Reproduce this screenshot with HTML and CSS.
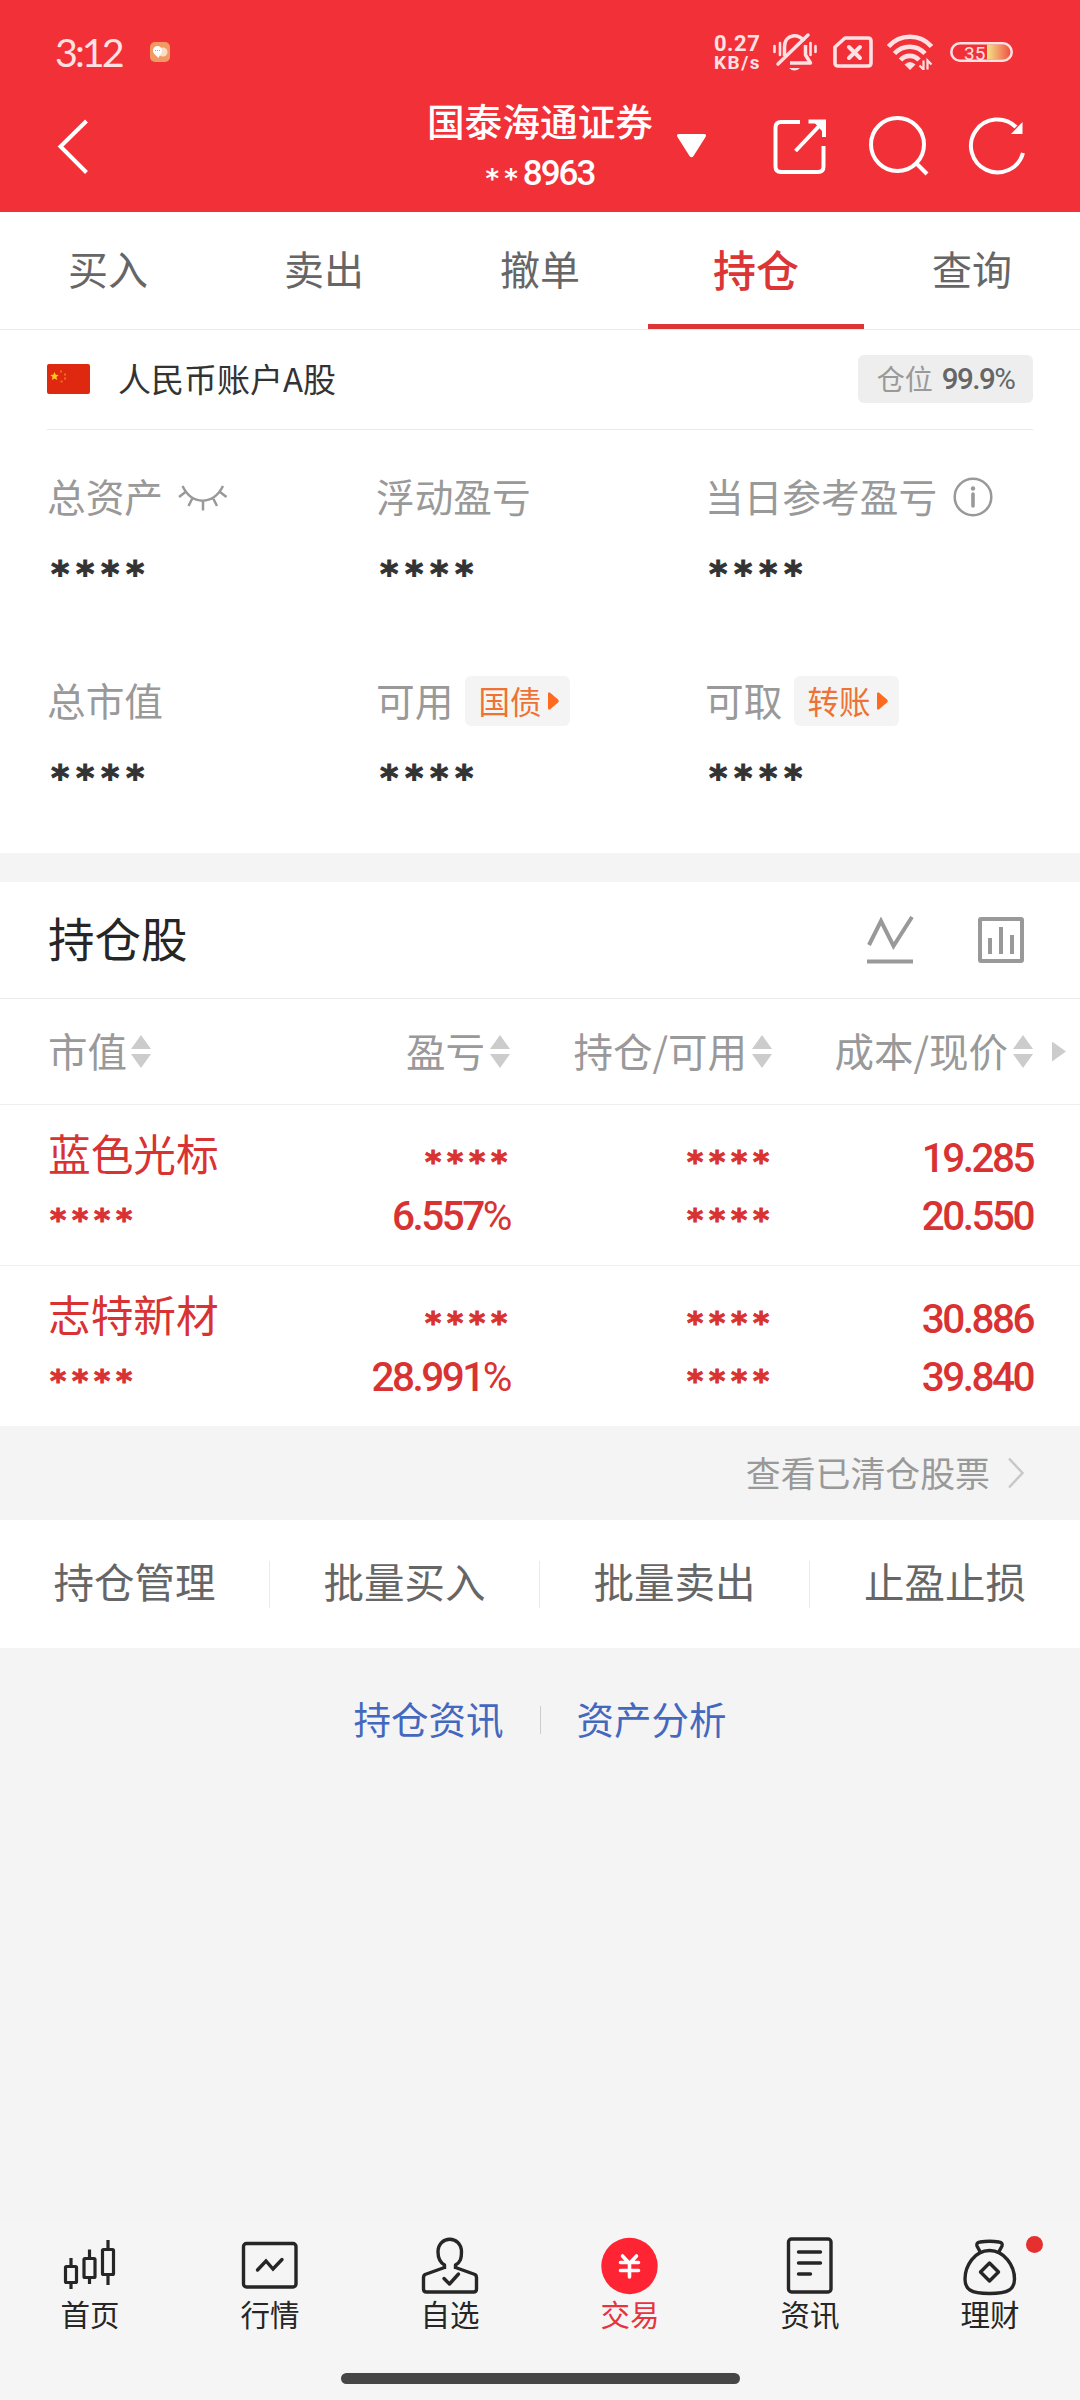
FILE: index.html
```html
<!DOCTYPE html>
<html lang="zh-CN">

<head>
    <meta charset="utf-8">
    <meta name="viewport" content="width=device-width, initial-scale=1.0">
    <title>持仓</title>
    <link rel="stylesheet" href="styles.css">
</head>

<body>
    <header>
        <div class="status">
            <span class="clock">3:12</span>
            <svg class="app" width="20" height="20" viewBox="0 0 20 20">
                <rect width="20" height="20" rx="5" fill="#f19a64" />
                <circle cx="13" cy="10" r="4.5" fill="#fbdcc6" />
                <path d="M3 8.5a4.5 4.5 0 0 1 9 0c0 3-2 4-3.500 7.500C6 13 3 12 3 8.500z" fill="#fff" />
                <path d="M5 8.500h5" stroke="#f19a64" stroke-dasharray="1 1" />
            </svg>
            <div class="speed"><b>0.27</b><b class="unit">KB/s</b></div>
            <svg class="bell" width="46" height="40" viewBox="0 0 46 40" fill="none" stroke="#ffe1e3" stroke-width="3.500">
                <path d="M2.500 14v6M8 11v12M38.500 11v12M43.500 14v6" stroke-width="2.600" stroke-linecap="round" />
                <path d="M12.500 24v-9c0-14 15.500-13.500 19.500-6M33.500 13v10l5 8H18" stroke-linejoin="round" />
                <path d="M6 32L36 3" stroke-linecap="round" />
                <path d="M17 36h11q-5.500 5-11 0z" fill="#ffe1e3" stroke="none" />
            </svg>
            <svg class="sim" width="40" height="32" viewBox="0 0 40 32" fill="none" stroke="#ffe1e3" stroke-width="3.600">
                <path d="M12 2h23q3 0 3 3v22q0 3-3 3H5q-3 0-3-3V11z" stroke-linejoin="round" />
                <path d="M16 11l11 11M27 11L16 22" stroke-width="4" stroke-linecap="round" />
            </svg>
            <svg class="wifi" width="46" height="36" viewBox="0 0 46 36" fill="none" stroke="#ffe1e3" stroke-width="4.600">
                <path d="M1.500 12.500C13-.5 33-.5 44.500 12.500M7.500 19.500c8.500-9 22-9 30.500 0M13.500 26c5-5.500 13.500-5.500 18.500 0" />
                <path d="M17.500 30.500q5.500-5 11 0L23 36z" fill="#ffe1e3" stroke="none" />
                <path d="M36.500 26.500v9l-4-4M40.500 35.500v-9l4 4" stroke-width="2.200" />
            </svg>
            <svg class="battery" width="63" height="20" viewBox="0 0 63 20">
                <defs>
                    <linearGradient id="charge">
                        <stop offset="0" stop-color="#f2e488" />
                        <stop offset="1" stop-color="#f05545" />
                    </linearGradient>
                </defs>
                <path d="M37 2.500h16q7 0 7 7.500t-7 7.500H37z" fill="url(#charge)" />
                <rect x="1.300" y="1.300" width="60.400" height="17.400" rx="8.700" fill="none" stroke="#ffe1e3" stroke-width="2.600" />
                <text x="14" y="17.500" class="percent">35</text>
            </svg>
        </div>
        <div class="titlebar">
            <svg class="back" width="45" height="60" viewBox="0 0 45 60" fill="none" stroke="#fff" stroke-width="4">
                <path d="M36.500 5L10.500 30.500l26 26" />
            </svg>
            <div class="broker">
                <h1>国泰海通证券</h1>
                <div class="number"><span class="hide">**</span>8963</div>
            </div>
            <svg class="caret" width="31" height="24" viewBox="0 0 31 24">
                <path d="M3 0h25q3 0 1.500 3L17.500 22q-2 2.500-4 0L1.500 3Q0 0 3 0z" fill="#fff" />
            </svg>
            <svg class="share" width="60" height="60" viewBox="0 0 60 60" fill="none" stroke="#fff" stroke-width="4">
                <path d="M30 6H11q-5.500 0-5.500 5.500v39q0 5.500 5.500 5.500h37q5.500 0 5.500-5.500V30" />
                <path d="M38.500 5.500H54V21M52 7L25.500 35" />
                <path d="M42 4h13.500v15z" fill="#fff" stroke="none" />
            </svg>
            <svg class="search" width="64" height="64" viewBox="0 0 64 64" fill="none" stroke="#fff" stroke-width="4">
                <circle cx="30.500" cy="30.500" r="26.500" />
                <path d="M49 49l11 11" />
            </svg>
            <svg class="refresh" width="60" height="62" viewBox="0 0 60 62" fill="none" stroke="#fff" stroke-width="4">
                <path d="M55 38A26.500 26.500 0 1 1 48 12" />
                <path d="M54.500 7v12H43z" fill="#fff" stroke="none" />
            </svg>
        </div>
    </header>

    <nav class="tabs">
        <a>买入</a>
        <a>卖出</a>
        <a>撤单</a>
        <a class="valgt">持仓</a>
        <a>查询</a>
    </nav>

    <section class="account">
        <div class="account-head">
            <svg width="43" height="30" viewBox="0 0 43 30">
                <rect width="43" height="30" rx="2" fill="#de2910" />
                <path d="M7.500 8l1.200 2.800 3 .2-2.300 2 .8 3-2.700-1.600L4.800 16l.8-3-2.300-2 3-.2z" fill="#ffc71e" />
                <path d="M13 7.500h2M17 10.500h2M17 14.500h2M13.500 17.500h2" stroke="#f0701c" stroke-width="2" />
            </svg>
            <h2>人民币账户A股</h2>
            <div class="position"><span>仓位</span><span class="num">99.9<i>%</i></span></div>
        </div>
        <div class="metrics">
            <div class="metric">
                <div class="label"><span>总资产</span>
                    <svg class="eye" width="50" height="26" viewBox="0 0 50 26" fill="none" stroke="#999" stroke-width="2.500">
                        <path d="M4.500 1C14 20.500 35 20.500 45 1M7.500 7L1 12M42 7l6.500 5M14 14l-3.500 7M25 16v9.500M35.500 14l3.500 7" />
                    </svg>
                </div>
                <div class="stars">****</div>
            </div>
            <div class="metric">
                <div class="label"><span>浮动盈亏</span></div>
                <div class="stars">****</div>
            </div>
            <div class="metric">
                <div class="label"><span>当日参考盈亏</span>
                    <svg class="info" width="40" height="40" viewBox="0 0 40 40" fill="none" stroke="#999" stroke-width="2.500">
                        <circle cx="20" cy="20" r="18.300" />
                        <path d="M20 17v12" stroke-width="3.600" stroke-linecap="round" />
                        <circle cx="20" cy="11.500" r="2.200" fill="#999" stroke="none" />
                    </svg>
                </div>
                <div class="stars">****</div>
            </div>
            <div class="metric">
                <div class="label"><span>总市值</span></div>
                <div class="stars">****</div>
            </div>
            <div class="metric">
                <div class="label"><span>可用</span>
                    <div class="chip"><span>国债</span>
                        <svg width="11" height="18" viewBox="0 0 11 18">
                            <path d="M0 2q0-3 2.500-1L10 7.500q1.500 1.500 0 3L2.500 17Q0 19 0 16z" fill="#ff6a1f" />
                        </svg>
                    </div>
                </div>
                <div class="stars">****</div>
            </div>
            <div class="metric">
                <div class="label"><span>可取</span>
                    <div class="chip"><span>转账</span>
                        <svg width="11" height="18" viewBox="0 0 11 18">
                            <path d="M0 2q0-3 2.500-1L10 7.500q1.500 1.500 0 3L2.500 17Q0 19 0 16z" fill="#ff6a1f" />
                        </svg>
                    </div>
                </div>
                <div class="stars">****</div>
            </div>
        </div>
    </section>

    <section class="holdings">
        <div class="holdings-head">
            <h2>持仓股</h2>
            <svg class="line" width="48" height="48" viewBox="0 0 48 48" fill="none" stroke="#999" stroke-width="4">
                <path d="M3 29L15 5l12.500 25L46 1M1 45.500h46" />
            </svg>
            <svg class="bars" width="48" height="48" viewBox="0 0 48 48" fill="none" stroke="#999" stroke-width="4">
                <rect x="3" y="3" width="42" height="42" rx="1" />
                <path d="M13 22v16M24 11v27M35 19v19" />
            </svg>
        </div>
        <div class="row columns">
            <div><span>市值</span><i class="sort"></i></div>
            <div><span>盈亏</span><i class="sort"></i></div>
            <div><span>持仓/可用</span><i class="sort"></i></div>
            <div><span>成本/现价</span><i class="sort"></i></div>
            <i class="more"></i>
        </div>
        <div class="row stock">
            <div><span class="name">蓝色光标</span><span class="stars">****</span></div>
            <div><span class="stars">****</span><span class="num">6.557<i>%</i></span></div>
            <div><span class="stars">****</span><span class="stars">****</span></div>
            <div><span class="num">19.285</span><span class="num">20.550</span></div>
        </div>
        <div class="row stock">
            <div><span class="name">志特新材</span><span class="stars">****</span></div>
            <div><span class="stars">****</span><span class="num">28.991<i>%</i></span></div>
            <div><span class="stars">****</span><span class="stars">****</span></div>
            <div><span class="num">30.886</span><span class="num">39.840</span></div>
        </div>
    </section>

    <div class="cleared">
        <span>查看已清仓股票</span>
        <svg width="18" height="32" viewBox="0 0 18 32" fill="none" stroke="#c8c8c8" stroke-width="2.500">
            <path d="M2 1.500L15.500 16 2 30.500" />
        </svg>
    </div>

    <div class="actions">
        <a>持仓管理</a>
        <a>批量买入</a>
        <a>批量卖出</a>
        <a>止盈止损</a>
    </div>

    <div class="links">
        <a>持仓资讯</a>
        <a>资产分析</a>
    </div>

    <footer>
        <nav class="menu">
            <a>
                <svg width="60" height="60" viewBox="0 0 60 60" fill="none" stroke="#262626" stroke-width="3.200">
                    <rect x="5.500" y="29.500" width="11" height="16" rx="1" />
                    <rect x="24" y="21.500" width="11" height="19" rx="1" />
                    <rect x="42.500" y="12.500" width="11" height="25" rx="1" />
                    <path d="M11 21v8M11 46v6M29.500 12.500v8M29.500 41v6M48 3v9M48 38v10" />
                </svg>
                <span>首页</span>
            </a>
            <a>
                <svg width="60" height="60" viewBox="0 0 60 60" fill="none" stroke="#262626" stroke-width="3.400">
                    <rect x="3.500" y="6.500" width="52.500" height="43.500" rx="3" />
                    <path d="M17.500 33l8.500-9 7 8 9-9.500" stroke-linecap="round" />
                </svg>
                <span>行情</span>
            </a>
            <a>
                <svg width="60" height="60" viewBox="0 0 60 60" fill="none" stroke="#262626" stroke-width="3.400" stroke-linejoin="round">
                    <path d="M24.500 30.500L5 37.500q-1.500 1-1.500 3V52q0 3 3 3h47q3 0 3-3V40.500q0-2-1.500-3L35.500 30.500" />
                    <path d="M24.500 32v-4c-5-3-6.500-6.500-6.500-13 0-17 23.500-17 23.500 0 0 6.500-1 10-6 13v4" />
                    <path d="M24 41.500l5.500 5.500 9-10" stroke-linecap="round" />
                </svg>
                <span>自选</span>
            </a>
            <a class="valgt">
                <svg width="60" height="60" viewBox="0 0 60 60" fill="none" stroke="#fff" stroke-width="3.600">
                    <circle cx="29.500" cy="29" r="28.200" fill="#ff2434" stroke="none" />
                    <path d="M22.500 19l7 7.500 7-7.500M20.500 25.500h18M20.500 33.500h18M29.500 26v14" stroke-linecap="round" />
                </svg>
                <span>交易</span>
            </a>
            <a>
                <svg width="60" height="60" viewBox="0 0 60 60" fill="none" stroke="#262626" stroke-width="3.400">
                    <rect x="8.500" y="2" width="42.500" height="53" rx="3" />
                    <path d="M18.500 15h22M18.500 26h22M18.500 37h12" stroke-linecap="round" />
                </svg>
                <span>资讯</span>
            </a>
            <a>
                <svg width="60" height="60" viewBox="0 0 60 60" fill="none" stroke="#262626" stroke-width="3.400" stroke-linejoin="round">
                    <path d="M20.500 15.500L17 9q-1-3.500 3-4 9.500-1.500 19 0 4 .5 3 4l-3.500 6.500" />
                    <path d="M29.500 13.500C14.500 13.500 5 29 5 42c0 10 5 14.500 24.500 14.500S54.500 52 54.500 42c0-13-10-28.500-25-28.500z" />
                    <path d="M29.500 26l9 9-9 9-9-9z" />
                </svg>
                <span>理财</span>
                <i class="dot"></i>
            </a>
        </nav>
        <div class="homebar"></div>
    </footer>
</body>

</html>
```
FILE: styles.css
```css
* {
    box-sizing: border-box;
}

body {
    display: flex;
    flex-direction: column;
    width: 1080px;
    height: 2400px;
    margin: 0;
    background-color: #f4f4f5;
    font-family: "Noto Sans CJK SC", sans-serif;
    color: #333;
}

h1,
h2 {
    margin: 0;
    font-weight: 400;
}

i {
    font-style: normal;
}

svg {
    display: block;
    flex-shrink: 0;
}

.num {
    font-family: Roboto, sans-serif;
    font-weight: 500;
}

.num i {
    font-weight: 400;
}

.stars {
    font-family: "DejaVu Sans", sans-serif;
    font-weight: bold;
    -webkit-text-stroke: 1px;
}

header {
    height: 212px;
    background-color: #f23038;
    color: #fff;
}

.status {
    display: flex;
    align-items: center;
    height: 80px;
    padding: 24px 0 0 55px;
    color: #ffe1e3;
}

.clock {
    width: 95px;
    font: 39.500px/56px Lato, sans-serif;
    letter-spacing: -3px;
}

.speed {
    width: 56px;
    margin-left: 544px;
    font: 22px/19px Roboto, sans-serif;
}

.speed b {
    display: block;
    height: 18px;
    letter-spacing: .5px;
}

.speed .unit {
    font-size: 19px;
    line-height: 21px;
    letter-spacing: 1.500px;
}

.bell {
    margin-left: 2px;
}

.sim {
    margin-left: 15px;
}

.wifi {
    margin-left: 14px;
}

.battery {
    margin-left: 17px;
    overflow: visible;
}

.percent {
    font: 19px Roboto, sans-serif;
    fill: #ffe1e3;
}

.titlebar {
    display: flex;
    align-items: center;
    height: 132px;
    padding-left: 50px;
}

.broker {
    width: 240px;
    margin-left: 325px;
    text-align: center;
}

.broker h1 {
    font-size: 37.700px;
    font-weight: 500;
    line-height: 52px;
}

.number {
    height: 52px;
    font: 500 35px/56px Roboto, sans-serif;
    letter-spacing: -2px;
}

.hide {
    font: bold 26px/20px "DejaVu Sans", sans-serif;
    letter-spacing: 5px;
    vertical-align: -3px;
}

.caret {
    margin-left: 16px;
}

.share {
    margin-left: 63px;
}

.search {
    margin-left: 37px;
}

.refresh {
    margin-left: 37px;
}

.tabs {
    display: grid;
    grid-template-columns: repeat(5, 1fr);
    height: 118px;
    background-color: white;
    border-bottom: 1px solid #ebebeb;
    text-align: center;
}

.tabs a {
    font-size: 40px;
    line-height: 112px;
    color: #666;
}

.tabs .valgt {
    font-size: 43px;
    font-weight: 500;
    line-height: 112px;
    color: #db3535;
    border-bottom: 5px solid #db3535;
}

.account {
    height: 523px;
    padding: 0 47px;
    background-color: white;
}

.account-head {
    display: flex;
    align-items: center;
    height: 100px;
    padding-bottom: 1px;
    border-bottom: 1px solid #ebebeb;
}

.account-head h2 {
    margin-left: 28px;
    padding-bottom: 3px;
    font-size: 33px;
}

.position {
    display: flex;
    align-items: center;
    justify-content: center;
    gap: 9px;
    width: 175px;
    height: 48px;
    margin-left: auto;
    border-radius: 6px;
    background-color: #eee;
    font-size: 28px;
    color: #999;
}

.position span {
    padding-bottom: 2px;
}

.position .num {
    padding: 0;
    font-size: 29.500px;
    letter-spacing: -1.500px;
    color: #666;
}

.metrics {
    display: grid;
    grid-template-columns: repeat(3, 329px);
    grid-auto-rows: 204px;
    padding-top: 37px;
}

.label {
    display: flex;
    align-items: center;
    height: 60px;
    font-size: 38.700px;
    color: #999;
}

.label span {
    padding-bottom: 5px;
}

.eye {
    margin: 1px 0 0 15px;
}

.info {
    margin-left: 16px;
}

.chip {
    display: flex;
    align-items: center;
    gap: 7px;
    width: 105px;
    height: 50px;
    margin-left: 12px;
    padding-left: 13px;
    border-radius: 6px;
    background-color: #f4f4f4;
    font-size: 31.500px;
    color: #ed7234;
}

.chip span {
    padding-bottom: 3px;
}

.metric .stars {
    padding-left: 4px;
    font-size: 35px;
    line-height: 94px;
    letter-spacing: 6.700px;
}

.holdings {
    margin-top: 29px;
    background-color: white;
}

.holdings-head {
    display: flex;
    align-items: center;
    height: 117px;
    padding: 0 55px 0 48px;
    border-bottom: 1px solid #ebebeb;
}

.holdings-head h2 {
    padding-bottom: 8px;
    font-size: 46.500px;
    color: #262626;
}

.line {
    margin-left: auto;
}

.bars {
    margin-left: 63px;
}

.row {
    display: grid;
    grid-template-columns: 200px 262px 262px 261px 33px;
    height: 161px;
    padding-left: 48px;
    border-bottom: 1px solid #efefef;
}

.columns {
    height: 106px;
    font-size: 39.500px;
    color: #999;
}

.columns div {
    display: flex;
    align-items: center;
    justify-content: flex-end;
    gap: 5px;
}

.columns div:first-child {
    justify-content: flex-start;
    gap: 4px;
}

.columns span {
    padding-bottom: 5px;
}

.sort {
    width: 20px;
    height: 33px;
    background-color: #ccc;
    clip-path: polygon(50% 0, 100% 14px, 0 14px, 0 19px, 100% 19px, 50% 100%, 0 19px, 0 14px);
}

.more {
    align-self: center;
    width: 14px;
    height: 20px;
    margin-left: 19px;
    background-color: #ccc;
    clip-path: polygon(0 0, 100% 50%, 0 100%);
}

.stock {
    padding-top: 23px;
    color: #d93232;
}

.stock:last-child {
    height: 160px;
    border-bottom: none;
}

.stock div {
    text-align: right;
}

.stock div:first-child {
    text-align: left;
}

.stock span {
    display: block;
    height: 58px;
    line-height: 58px;
}

.stock .name {
    font-size: 42.700px;
    line-height: 49px;
}

.stock .num {
    font-size: 40.500px;
    line-height: 60px;
    letter-spacing: -2.500px;
}

.stock .stars {
    padding-left: 2px;
    margin-right: -3px;
    font-size: 31px;
    line-height: 66px;
    letter-spacing: 5.800px;
}

.cleared {
    display: flex;
    align-items: center;
    justify-content: flex-end;
    gap: 17px;
    height: 94px;
    padding-right: 55px;
    background-color: #f4f4f4;
    font-size: 34.900px;
    color: #999;
}

.cleared span {
    padding-bottom: 3px;
}

.actions {
    display: grid;
    grid-template-columns: repeat(4, 1fr);
    align-items: center;
    height: 128px;
    background-color: white;
}

.actions a {
    height: 47px;
    border-right: 1px solid #ebebeb;
    font-size: 40.500px;
    line-height: 40px;
    text-align: center;
    color: #666;
}

.actions a:last-child {
    border-right: none;
}

.links {
    display: flex;
    justify-content: center;
    padding-top: 58px;
}

.links a {
    height: 28px;
    padding: 0 36px;
    font-size: 37.500px;
    line-height: 24px;
    color: #4468bd;
}

.links a:first-child {
    border-right: 1px solid #ccc;
}

footer {
    height: 180px;
    margin-top: auto;
    background-color: #f5f5f5;
}

.menu {
    display: grid;
    grid-template-columns: repeat(6, 1fr);
    height: 153px;
    padding-top: 17px;
}

.menu a {
    position: relative;
    display: flex;
    flex-direction: column;
    align-items: center;
    font-size: 29.500px;
    line-height: 32px;
    color: #262626;
}

.menu .valgt {
    color: #e8323f;
}

.dot {
    position: absolute;
    top: -1px;
    left: 126px;
    width: 17px;
    height: 17px;
    border-radius: 50%;
    background-color: #e63030;
}

.homebar {
    width: 399px;
    height: 11px;
    margin: 0 auto;
    border-radius: 6px;
    background-color: #464646;
}
```
